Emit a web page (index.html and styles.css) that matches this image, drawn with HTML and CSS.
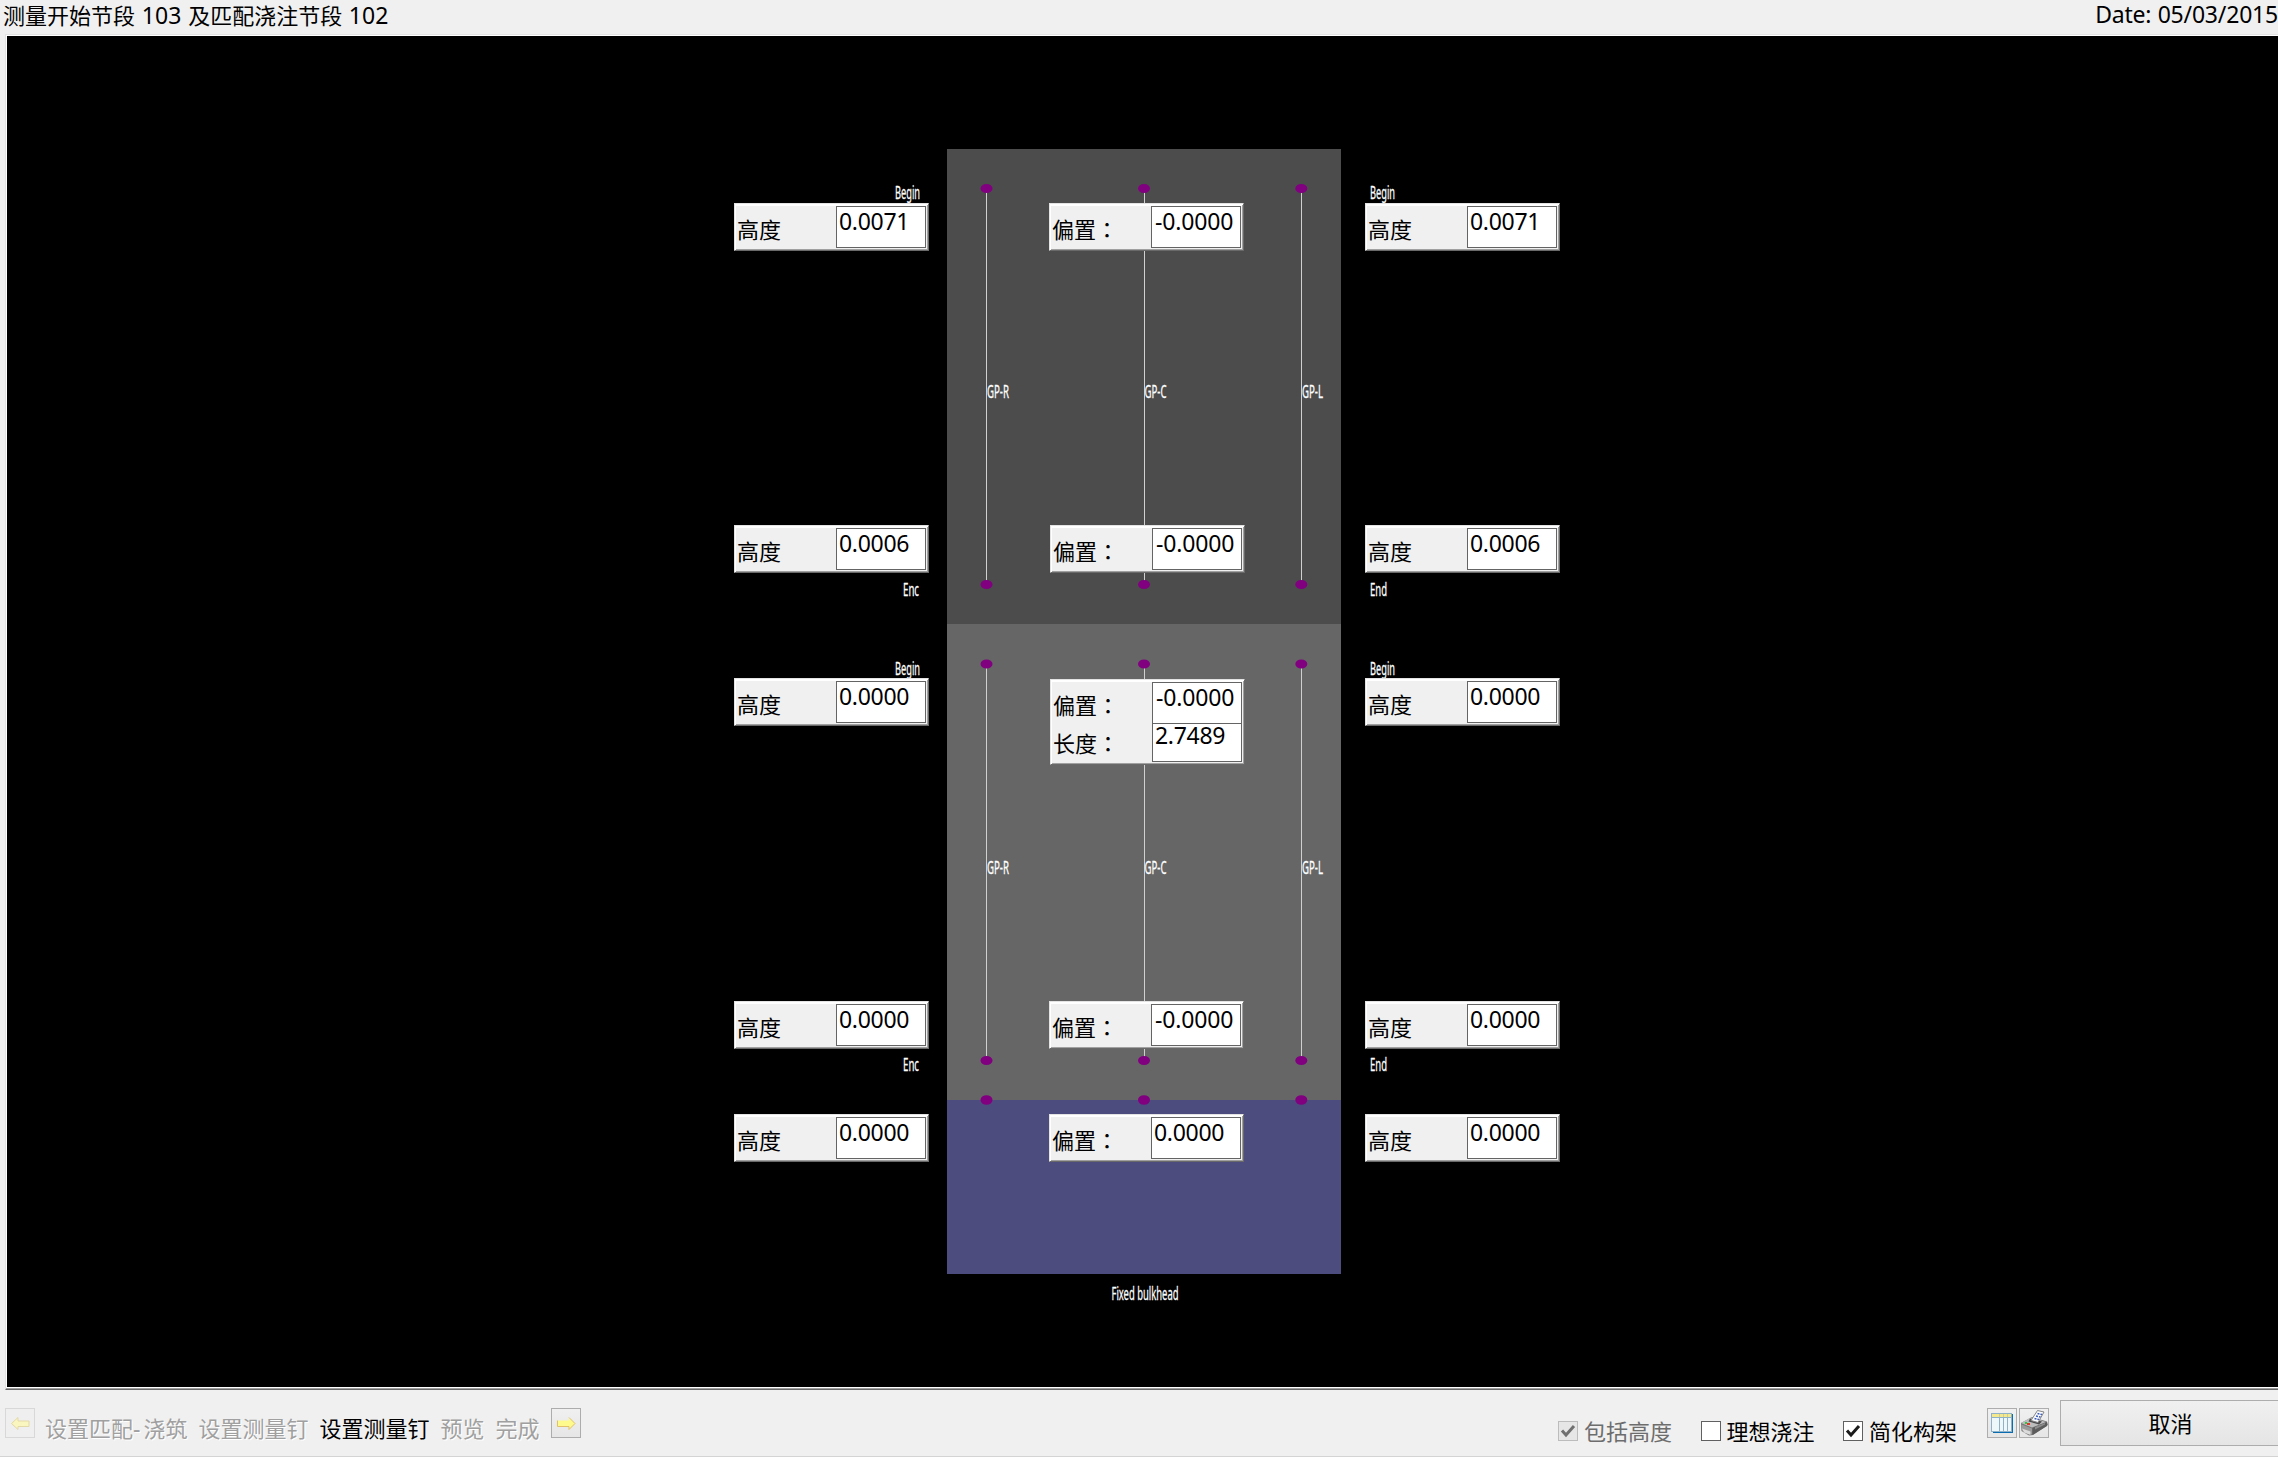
FILE: index.html
```html
<!DOCTYPE html>
<html lang="zh-CN">
<head>
<meta charset="utf-8">
<title>测量</title>
<link rel="stylesheet" href="styles.css">
</head>
<body>
<div class="window">
  <header class="titlebar">
    <div>测量开始节段<span class="num"> 103 </span>及匹配浇注节段<span class="num"> 102</span></div>
    <div class="num date">Date: 05/03/2015</div>
  </header>

  <main class="canvas">
    <svg class="diagram" width="2271" height="1351" viewBox="7 36 2271 1351">
      <rect x="947" y="149" width="394" height="475" fill="#4c4c4c"/>
      <rect x="947" y="624" width="394" height="476" fill="#666666"/>
      <rect x="947" y="1100" width="394" height="174" fill="#4c4c7f"/>
      <g stroke="#d0d0d0" stroke-width="1">
        <path d="M986.5 188V584M1144.500 188V584M1301.500 188V584"/>
        <path d="M986.5 664V1060M1144.500 664V1060M1301.500 664V1060"/>
      </g>
      <g fill="#800080">
        <ellipse cx="986.500" cy="188.500" rx="6" ry="4.600"/><ellipse cx="1144" cy="188.500" rx="6" ry="4.600"/><ellipse cx="1301.300" cy="188.500" rx="6" ry="4.600"/>
        <ellipse cx="986.500" cy="584.500" rx="6" ry="4.600"/><ellipse cx="1144" cy="584.500" rx="6" ry="4.600"/><ellipse cx="1301.300" cy="584.500" rx="6" ry="4.600"/>
        <ellipse cx="986.500" cy="664" rx="6" ry="4.600"/><ellipse cx="1144" cy="664" rx="6" ry="4.600"/><ellipse cx="1301.300" cy="664" rx="6" ry="4.600"/>
        <ellipse cx="986.500" cy="1060.500" rx="6" ry="4.600"/><ellipse cx="1144" cy="1060.500" rx="6" ry="4.600"/><ellipse cx="1301.300" cy="1060.500" rx="6" ry="4.600"/>
        <ellipse cx="986.500" cy="1100" rx="6" ry="4.800"/><ellipse cx="1144" cy="1100" rx="6" ry="4.800"/><ellipse cx="1301.300" cy="1100" rx="6" ry="4.800"/>
      </g>
      <g class="tag">
        <text x="895" y="199" textLength="25" lengthAdjust="spacingAndGlyphs">Begin</text>
        <text x="1370" y="199" textLength="25" lengthAdjust="spacingAndGlyphs">Begin</text>
        <text x="903" y="596" textLength="16" lengthAdjust="spacingAndGlyphs">Enc</text>
        <text x="1370" y="596" textLength="17" lengthAdjust="spacingAndGlyphs">End</text>
        <text x="895" y="675" textLength="25" lengthAdjust="spacingAndGlyphs">Begin</text>
        <text x="1370" y="675" textLength="25" lengthAdjust="spacingAndGlyphs">Begin</text>
        <text x="903" y="1071" textLength="16" lengthAdjust="spacingAndGlyphs">Enc</text>
        <text x="1370" y="1071" textLength="17" lengthAdjust="spacingAndGlyphs">End</text>
        <text x="987" y="397.500" textLength="22" lengthAdjust="spacingAndGlyphs">GP-R</text>
        <text x="1144.500" y="397.500" textLength="22" lengthAdjust="spacingAndGlyphs">GP-C</text>
        <text x="1302" y="397.500" textLength="21" lengthAdjust="spacingAndGlyphs">GP-L</text>
        <text x="987" y="873.500" textLength="22" lengthAdjust="spacingAndGlyphs">GP-R</text>
        <text x="1144.500" y="873.500" textLength="22" lengthAdjust="spacingAndGlyphs">GP-C</text>
        <text x="1302" y="873.500" textLength="21" lengthAdjust="spacingAndGlyphs">GP-L</text>
        <text x="1111.500" y="1300" textLength="67" lengthAdjust="spacingAndGlyphs">Fixed bulkhead</text>
      </g>
    </svg>

    <div class="field r1 left"><label>高度</label><div class="value">0.0071</div></div>
    <div class="field r1 mid"><label>偏置<span class="colon" lang="zh-TW">：</span></label><div class="value neg">-0.0000</div></div>
    <div class="field r1 right"><label>高度</label><div class="value">0.0071</div></div>

    <div class="field r2 left"><label>高度</label><div class="value">0.0006</div></div>
    <div class="field r2 mid"><label>偏置<span class="colon" lang="zh-TW">：</span></label><div class="value neg">-0.0000</div></div>
    <div class="field r2 right"><label>高度</label><div class="value">0.0006</div></div>

    <div class="field r3 left"><label>高度</label><div class="value">0.0000</div></div>
    <div class="field r3 mid double">
      <label>偏置<span class="colon" lang="zh-TW">：</span></label><div class="value neg">-0.0000</div>
      <label>长度<span class="colon" lang="zh-TW">：</span></label><div class="value">2.7489</div>
    </div>
    <div class="field r3 right"><label>高度</label><div class="value">0.0000</div></div>

    <div class="field r4 left"><label>高度</label><div class="value">0.0000</div></div>
    <div class="field r4 mid"><label>偏置<span class="colon" lang="zh-TW">：</span></label><div class="value neg">-0.0000</div></div>
    <div class="field r4 right"><label>高度</label><div class="value">0.0000</div></div>

    <div class="field r5 left"><label>高度</label><div class="value">0.0000</div></div>
    <div class="field r5 mid"><label>偏置<span class="colon" lang="zh-TW">：</span></label><div class="value">0.0000</div></div>
    <div class="field r5 right"><label>高度</label><div class="value">0.0000</div></div>
  </main>

  <footer class="toolbar">
    <nav class="steps">
      <div class="iconbtn disabled">
        <svg width="28" height="28" viewBox="0 0 28 28"><path d="M5.500 14.500L12 8.500V12H23V17.500H12V20.500Z" fill="#faf6c0" stroke="#e3d9a6"/></svg>
      </div>
      <span class="step s1">设置匹配<span class="num">-</span>浇筑</span>
      <span class="step">设置测量钉</span>
      <span class="step current">设置测量钉</span>
      <span class="step">预览</span>
      <span class="step">完成</span>
      <div class="iconbtn next">
        <svg width="28" height="28" viewBox="0 0 28 28"><path d="M23 14.500L17 8.500V11.500H5.500V17.500H17V20.500Z" fill="#fffa8c"/><path d="M5.500 11.500V17.500H17V20.500L23 14.500L17 8.500" fill="none" stroke="#e0c068"/></svg>
      </div>
    </nav>
    <div class="options">
      <div class="check off"><i><svg width="18" height="18" viewBox="0 0 18 18"><path d="M3 8.500L7 13L15 4" fill="none" stroke="#707070" stroke-width="3"/></svg></i><span>包括高度</span></div>
      <div class="check"><i></i><span>理想浇注</span></div>
      <div class="check"><i><svg width="18" height="18" viewBox="0 0 18 18"><path d="M3 8.500L7 13L15 4" fill="none" stroke="#1c1c1c" stroke-width="3"/></svg></i><span>简化构架</span></div>
    </div>
    <div class="tools">
      <div class="iconbtn">
        <svg width="28" height="28" viewBox="0 0 28 28">
          <path d="M5 5H25V24H5Z" fill="#0a6cb0"/>
          <rect x="3" y="4" width="21" height="19" fill="#8fb2c8"/>
          <rect x="4" y="5" width="19" height="3" fill="#f2e98e"/>
          <path d="M4 9H11V22H4ZM12 9H15V22H12ZM16 9H19V22H16ZM20 9H23V22H20Z" fill="#eef8fb"/>
          <path d="M11.500 5V8M15.500 5V8M19.500 5V8" stroke="#d5cf8e"/>
        </svg>
      </div>
      <div class="iconbtn">
        <svg width="28" height="28" viewBox="0 0 28 28">
          <path d="M1 14L12 8L27 12.500L28 16L13 26L9 26.500L1.500 22Z" fill="#777"/>
          <path d="M1 14L11 8.500L26 13L12 18.500Z" fill="#bdbdbd"/>
          <path d="M1.500 15.500L12 19.500V25.500L2 21.500Z" fill="#9c9c9c"/>
          <path d="M2 19.500L10.500 22.500V26L4 23.500Z" fill="#dcdcdc"/>
          <path d="M12.500 19L27 13V17L12.500 26Z" fill="#5c5c5c"/>
          <path d="M15 18L25 14V15.500L15 20.500Z" fill="#8c8c8c"/>
          <path d="M10 9.500L22 12.500L19 15.500L8.500 12.500Z" fill="#4b4b4b"/>
          <path d="M11 11.500L17.500 1.500L24 3L18 13.500Z" fill="#fafcff" stroke="#858585"/>
          <path d="M17.500 4.500L22 5.500M16 7L20.500 8M14.500 9.500L19 10.500" stroke="#3d5bb8" stroke-width="1.500" stroke-dasharray="2 1"/>
          <rect x="5" y="13" width="2" height="2" fill="#22cc44"/><rect x="7" y="14" width="3" height="2" fill="#e53528"/>
        </svg>
      </div>
    </div>
    <button class="cancel">取消</button>
  </footer>
</div>
</body>
</html>
```
FILE: styles.css
```css
* { box-sizing: border-box; }

body {
  margin: 0;
  background: #f0f0f0;
  color: #000;
  font: 22px/28px "Noto Sans CJK SC", sans-serif;
  overflow: hidden;
}

.window {
  width: 2278px;
  height: 1457px;
  overflow: hidden;
  display: flex;
  flex-direction: column;
  border-bottom: 1px solid #d4d4d4;
}

.num, .value {
  font-family: "Noto Sans", sans-serif;
  font-size: 23px;
  letter-spacing: -0.3px;
  white-space: pre;
}

.titlebar {
  height: 34px;
  flex: none;
  display: flex;
  justify-content: space-between;
  padding: 0 0 0 3px;
}
.titlebar .num { letter-spacing: 0.1px; word-spacing: 0.6px; line-height: 24px; }
.titlebar .date { letter-spacing: -0.2px; line-height: 29px; }

.canvas {
  position: relative;
  flex: none;
  height: 1356px;
  margin-left: 5px;
  background: #000;
  border: solid #fff;
  border-width: 2px 0 3px 2px;
}
.canvas::before {
  content: "";
  position: absolute;
  inset: -2px 0 -3px -2px;
  border-top: 1px solid #e3e3e3;
  border-left: 1px solid #e3e3e3;
  border-bottom: 1px solid #696969;
}
.canvas::after {
  content: "";
  position: absolute;
  left: -1px;
  right: 0;
  bottom: -2px;
  height: 1px;
  background: #a0a0a0;
}

.diagram { display: block; }

.tag {
  fill: #fff;
  stroke: #fff;
  stroke-width: 0.3px;
  font: 18px "Noto Sans", sans-serif;
}

.field {
  position: absolute;
  width: 195px;
  height: 48px;
  display: grid;
  grid-template-columns: 1fr 90px;
  background: #f0f0f0;
  padding: 2px 2px 2px 1px;
  border: 1px solid;
  border-color: #e3e3e3 #696969 #696969 #e3e3e3;
  box-shadow: inset 1px 1px 0 #fff, inset -1px -1px 0 #a0a0a0, inset 0 2px 0 #fff;
}
.field.left { left: 727px; }
.field.mid { left: 1042px; }
.field.right { left: 1358px; }
.field.r1 { top: 167px; }
.field.r2 { top: 489px; }
.field.r3 { top: 642px; }
.field.r4 { top: 965px; }
.field.r5 { top: 1078px; }
.field.r2.mid, .field.r3.mid { left: 1043px; }

.field label { padding: 8px 0 0 1px; white-space: nowrap; }
.colon { font-family: "Noto Sans CJK TC", sans-serif; }

.value {
  height: 42px;
  background: #fff;
  border: 1px solid #646464;
  padding: 0 0 0 2px;
}
.value.neg { padding-left: 3px; letter-spacing: -0.15px; }

.field.double { top: 643px; height: 86px; grid-template-rows: 41px 39px; }
.double .value:last-child { height: 39px; line-height: 22px; }
.double label:nth-of-type(2) { padding-top: 5px; }

.toolbar {
  flex: 1;
  display: flex;
  align-items: flex-start;
  padding: 10px 0 0 5px;
}

.iconbtn {
  width: 30px;
  height: 30px;
  flex: none;
  border: 1px solid #adadad;
  background: linear-gradient(#f0f0f0, #e6e6e6);
}
.iconbtn svg { display: block; }
.iconbtn.disabled { border-color: #d8d8d8; background: #efefef; }

.steps { display: flex; flex: none; padding-top: 8px; width: 1553px; }
.step {
  height: 28px;
  margin: 5px 11px 0 0;
  color: #a0a0a0;
  text-shadow: 1px 1px 0 #fff;
  white-space: nowrap;
}
.step .num { letter-spacing: 3px; line-height: 20px; }
.s1 { margin-left: 10px; }
.current { color: #000; text-shadow: none; }

.options { display: flex; flex: none; padding-top: 18px; gap: 28.500px; margin-right: 30px; }
.check { display: flex; white-space: nowrap; gap: 6px; }
.check span { margin-top: -2px; }
.check i {
  width: 20px;
  height: 20px;
  margin-top: 3px;
  border: 1px solid #606060;
  background: #fff;
}
.check svg { display: block; }
.check.off { color: #6d6d6d; }
.check.off i { border-color: #bcbcbc; background: #e6e6e6; }

.tools { display: flex; flex: none; gap: 2px; padding-top: 8px; }

.cancel {
  flex: none;
  width: 221px;
  height: 46px;
  margin-left: 11px;
  padding: 0 0 3px;
  border: 1px solid #adadad;
  background: linear-gradient(#f0f0f0, #e5e5e5);
  font: inherit;
  color: inherit;
}
```
